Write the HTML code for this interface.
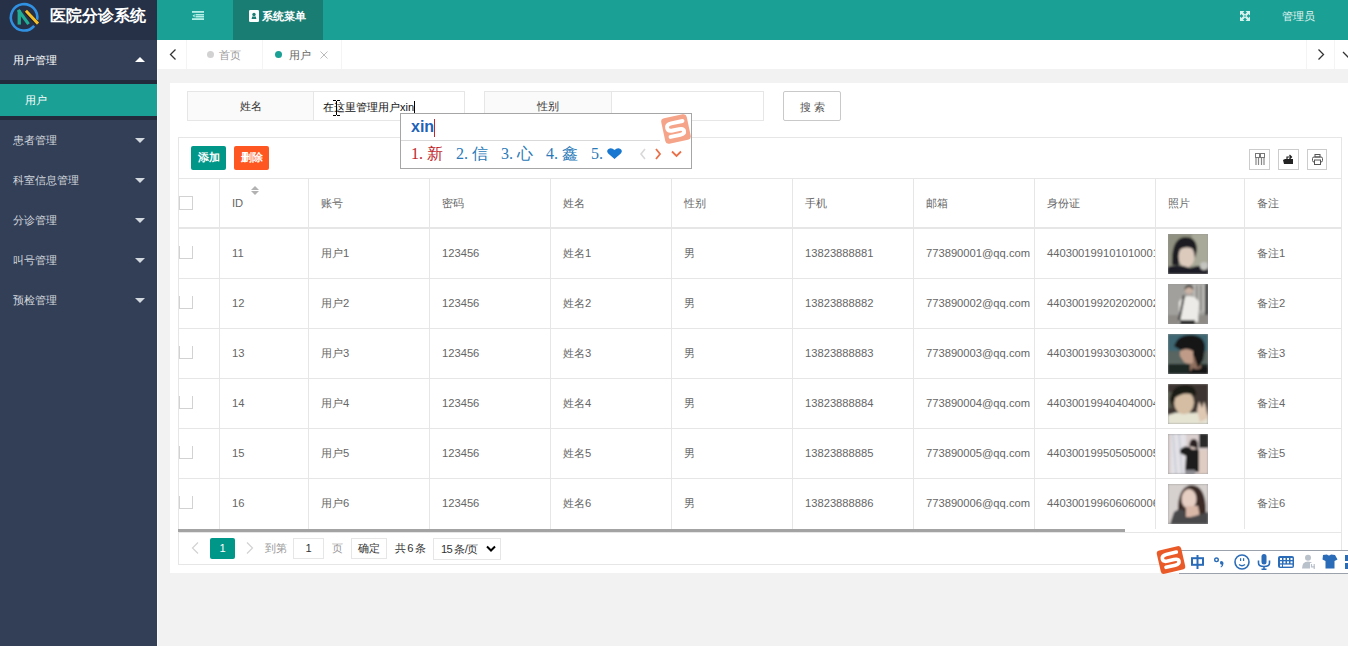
<!DOCTYPE html><html><head><meta charset="utf-8"><style>
*{margin:0;padding:0;box-sizing:border-box}
html,body{width:1348px;height:646px;overflow:hidden;background:#f2f2f2;font-family:"Liberation Sans",sans-serif;font-size:11.2px;color:#666}
.a{position:absolute}
.side{left:0;top:0;width:157px;height:646px;background:#323f57}
.logo{left:0;top:0;width:157px;height:40px;background:#263147}
.logotxt{left:50px;top:0px;height:32px;line-height:32px;font-size:16px;font-weight:bold;color:#fff}
.mi{left:0;width:157px;height:40px;line-height:40px;padding-left:13px;color:#d3d7de;font-size:11.2px}
.tri{width:0;height:0;border-left:5px solid transparent;border-right:5px solid transparent}
.hdr{left:157px;top:0;width:1191px;height:40px;background:#1aa094}
.tabbar{left:157px;top:40px;width:1191px;height:29px;background:#fff}
.vl{width:1px;background:#f4f4f4}
.card{left:170px;top:83px;width:1178px;height:490px;background:#fff}
.lbl{background:#fafafa;border:1px solid #e6e6e6;color:#333;text-align:center;line-height:28px}
.inp{background:#fff;border:1px solid #e6e6e6;color:#333;line-height:28px}
.cell{height:50px;line-height:50px;white-space:nowrap;overflow:hidden;color:#666;padding-left:13px}
.hl{background:#e6e6e6}
.ph{position:absolute;left:1168px;width:40px;height:40px;overflow:hidden}
</style></head><body>
<div class="a side"></div><div class="a logo"></div><div class="a" style="left:157px;top:69px;width:1px;height:577px;background:#fafafa"></div>
<svg class="a" style="left:0;top:0" width="46" height="36" viewBox="0 0 46 36">
<path d="M34.2 25.8 A13.2 13.2 0 1 1 37 20" fill="none" stroke="#3090e2" stroke-width="2.6"/>
<path d="M17.6 10.3 H20.9 V24.6 H17.6Z" fill="#1fae95"/>
<path d="M19.2 11.2 L27.6 22.8" stroke="#1fae95" stroke-width="3.2" stroke-linecap="square"/>
<path d="M25.6 11 L37.8 23.8" stroke="#141a26" stroke-width="4.4"/>
<path d="M25.9 10.8 L38 23.6" stroke="#f3be2a" stroke-width="3"/>
</svg>
<div class="a logotxt">医院分诊系统</div>
<div class="a mi" style="top:40px;background:#323f57;color:#fff">用户管理</div>
<div class="a tri" style="left:135px;top:57px;border-bottom:5px solid #fff"></div>
<div class="a" style="left:0;top:80px;width:157px;height:40px;background:#222b3b"></div>
<div class="a mi" style="top:84px;height:32px;line-height:32px;background:#1aa094;color:#fff;padding-left:25px">用户</div>
<div class="a mi" style="top:120px">患者管理</div>
<div class="a tri" style="left:135px;top:138px;border-top:5px solid #d3d7de"></div>
<div class="a mi" style="top:160px">科室信息管理</div>
<div class="a tri" style="left:135px;top:178px;border-top:5px solid #d3d7de"></div>
<div class="a mi" style="top:200px">分诊管理</div>
<div class="a tri" style="left:135px;top:218px;border-top:5px solid #d3d7de"></div>
<div class="a mi" style="top:240px">叫号管理</div>
<div class="a tri" style="left:135px;top:258px;border-top:5px solid #d3d7de"></div>
<div class="a mi" style="top:280px">预检管理</div>
<div class="a tri" style="left:135px;top:298px;border-top:5px solid #d3d7de"></div>
<div class="a hdr"></div>
<div class="a" style="left:233px;top:0;width:90px;height:40px;background:#1a7d74"></div>
<svg class="a" style="left:192px;top:11px" width="12" height="9" viewBox="0 0 12 9">
<rect x="0" y="0" width="12" height="1.8" fill="#b4efe7"/><rect x="3.5" y="3" width="8.5" height="1.5" fill="#b4efe7"/>
<rect x="3.5" y="5" width="8.5" height="1.5" fill="#b4efe7"/><rect x="0" y="7.2" width="12" height="1.8" fill="#b4efe7"/>
<path d="M0.5 4.7 L2.7 3 L2.7 6.4Z" fill="#b4efe7"/></svg>
<svg class="a" style="left:249px;top:10px" width="10" height="12" viewBox="0 0 10 12">
<rect x="0" y="0" width="10" height="12" rx="1.2" fill="#fbfffd"/><circle cx="5" cy="4.5" r="1.7" fill="#1a7d74"/><path d="M2.6 9 L3.2 6.6 H6.8 L7.4 9Z" fill="#1a7d74"/></svg>
<div class="a" style="left:262px;top:0;height:32px;line-height:32px;color:#fff;font-weight:bold;font-size:11.2px">系统菜单</div>
<svg class="a" style="left:1240px;top:11px" width="10" height="10" viewBox="0 0 10 10">
<path d="M0 0H4.5L0 4.5Z M10 0H5.5L10 4.5Z M0 10H4.5L0 5.5Z M10 10H5.5L10 5.5Z" fill="#d5f3ee"/><path d="M1 1L9 9M9 1L1 9" stroke="#d5f3ee" stroke-width="2.4"/><circle cx="5" cy="5" r="1" fill="#5fb8ad"/></svg>
<div class="a" style="left:1282px;top:0;height:32px;line-height:32px;color:#e4f6f3;font-size:11.2px">管理员</div>
<div class="a tabbar"></div>
<div class="a vl" style="left:186px;top:40px;height:29px"></div>
<div class="a vl" style="left:262px;top:40px;height:29px"></div>
<div class="a vl" style="left:341px;top:40px;height:29px"></div>
<div class="a vl" style="left:1306px;top:40px;height:29px"></div>
<div class="a vl" style="left:1334px;top:40px;height:29px"></div>
<svg class="a" style="left:169px;top:49px" width="8" height="11" viewBox="0 0 8 11"><path d="M6.5 0.5 L1.5 5.5 L6.5 10.5" fill="none" stroke="#333" stroke-width="1.3"/></svg>
<svg class="a" style="left:1317px;top:49px" width="8" height="11" viewBox="0 0 8 11"><path d="M1.5 0.5 L6.5 5.5 L1.5 10.5" fill="none" stroke="#333" stroke-width="1.3"/></svg>
<svg class="a" style="left:1342px;top:49px" width="8" height="11" viewBox="0 0 8 11"><path d="M1 3 L6 8 L11 3" fill="none" stroke="#333" stroke-width="1.3"/></svg>
<div class="a" style="left:207px;top:51px;width:7px;height:7px;border-radius:50%;background:#d2d2d2"></div>
<div class="a" style="left:219px;top:41px;height:29px;line-height:29px;color:#999">首页</div>
<div class="a" style="left:275px;top:51px;width:7px;height:7px;border-radius:50%;background:#1aa094"></div>
<div class="a" style="left:289px;top:41px;height:29px;line-height:29px;color:#666">用户</div>
<svg class="a" style="left:320px;top:51px" width="8" height="8" viewBox="0 0 8 8"><path d="M0.5 0.5L7.5 7.5M7.5 0.5L0.5 7.5" stroke="#bbb" stroke-width="1"/></svg>
<div class="a card"></div>
<div class="a lbl" style="left:187px;top:91px;width:127px;height:30px">姓名</div>
<div class="a inp" style="left:313px;top:91px;width:152px;height:30px;padding-left:9px;font-size:11px;line-height:30px;color:#111">在这里管理用户xin</div>
<div class="a" style="left:400px;top:113px;width:14px;height:1px;background:#222"></div>
<div class="a" style="left:414px;top:101px;width:1px;height:12px;background:#000"></div>
<div class="a lbl" style="left:484px;top:91px;width:128px;height:30px">性别</div>
<div class="a inp" style="left:611px;top:91px;width:153px;height:30px"></div>
<div class="a" style="left:783px;top:91px;width:58px;height:30px;border:1px solid #c9c9c9;border-radius:2px;background:#fff;color:#555;text-align:center;line-height:30px;letter-spacing:3px;padding-left:3px">搜索</div>
<div class="a" style="left:333px;top:100px;width:3px;height:1px;background:#000"></div><div class="a" style="left:337px;top:100px;width:3px;height:1px;background:#000"></div>
<div class="a" style="left:336px;top:101px;width:1px;height:14px;background:#000"></div>
<div class="a" style="left:333px;top:115px;width:3px;height:1px;background:#000"></div><div class="a" style="left:337px;top:115px;width:3px;height:1px;background:#000"></div>
<div class="a" style="left:178px;top:137px;width:1164px;height:428px;border:1px solid #e6e6e6"></div>
<div class="a" style="left:191px;top:146px;width:35px;height:24px;background:#009688;border-radius:2px;color:#fff;text-align:center;line-height:23px;font-size:10.5px;font-weight:bold">添加</div>
<div class="a" style="left:234px;top:146px;width:35px;height:24px;background:#ff5722;border-radius:2px;color:#fff;text-align:center;line-height:23px;font-size:10.5px;font-weight:bold">删除</div>
<div class="a" style="left:1249px;top:149px;width:21px;height:21px;border:1px solid #ccc"></div>
<div class="a" style="left:1278px;top:149px;width:21px;height:21px;border:1px solid #ccc"></div>
<div class="a" style="left:1307px;top:149px;width:20px;height:21px;border:1px solid #ccc"></div>
<svg class="a" style="left:1255px;top:153px" width="10" height="12" viewBox="0 0 10 12">
<rect x="0.5" y="0.5" width="4" height="4" fill="none" stroke="#777"/><rect x="5.5" y="0.5" width="4" height="4" fill="none" stroke="#777"/>
<path d="M1 5V12M3.5 5V12M6.5 5V12M9 5V12" stroke="#888" stroke-width="1.2"/></svg>
<svg class="a" style="left:1283px;top:154px" width="11" height="10" viewBox="0 0 11 10">
<path d="M0 6 L2 5 H10 V10 H1Z" fill="#222"/><path d="M4 5 V3 H8 M6.5 1 L8.5 3 L6.5 5" fill="none" stroke="#222" stroke-width="1.2"/></svg>
<svg class="a" style="left:1312px;top:154px" width="11" height="11" viewBox="0 0 11 11">
<rect x="3" y="0.5" width="5" height="2.5" fill="none" stroke="#555"/><rect x="0.5" y="3" width="10" height="5" rx="1.5" fill="none" stroke="#555"/>
<rect x="2.5" y="6" width="6" height="4.5" fill="#fff" stroke="#555"/></svg>
<div class="a hl" style="left:178px;top:178px;width:1164px;height:1px"></div>
<div class="a hl" style="left:178px;top:227px;width:1164px;height:2px"></div>
<div class="a hl" style="left:178px;top:278px;width:1164px;height:1px"></div>
<div class="a hl" style="left:178px;top:328px;width:1164px;height:1px"></div>
<div class="a hl" style="left:178px;top:378px;width:1164px;height:1px"></div>
<div class="a hl" style="left:178px;top:428px;width:1164px;height:1px"></div>
<div class="a hl" style="left:178px;top:478px;width:1164px;height:1px"></div>
<div class="a hl" style="left:219px;top:178px;width:1px;height:351px"></div>
<div class="a hl" style="left:308px;top:178px;width:1px;height:351px"></div>
<div class="a hl" style="left:429px;top:178px;width:1px;height:351px"></div>
<div class="a hl" style="left:550px;top:178px;width:1px;height:351px"></div>
<div class="a hl" style="left:671px;top:178px;width:1px;height:351px"></div>
<div class="a hl" style="left:792px;top:178px;width:1px;height:351px"></div>
<div class="a hl" style="left:913px;top:178px;width:1px;height:351px"></div>
<div class="a hl" style="left:1034px;top:178px;width:1px;height:351px"></div>
<div class="a hl" style="left:1155px;top:178px;width:1px;height:351px"></div>
<div class="a hl" style="left:1244px;top:178px;width:1px;height:351px"></div>
<div class="a hl" style="left:1341px;top:178px;width:1px;height:351px"></div>
<div class="a cell" style="left:219px;top:178px;width:89px">ID</div>
<div class="a cell" style="left:308px;top:178px;width:121px">账号</div>
<div class="a cell" style="left:429px;top:178px;width:121px">密码</div>
<div class="a cell" style="left:550px;top:178px;width:121px">姓名</div>
<div class="a cell" style="left:671px;top:178px;width:121px">性别</div>
<div class="a cell" style="left:792px;top:178px;width:121px">手机</div>
<div class="a cell" style="left:913px;top:178px;width:121px">邮箱</div>
<div class="a cell" style="left:1034px;top:178px;width:121px">身份证</div>
<div class="a cell" style="left:1155px;top:178px;width:89px">照片</div>
<div class="a cell" style="left:1244px;top:178px;width:97px">备注</div>
<div class="a" style="left:179px;top:196px;width:14px;height:14px;border:1px solid #d2d2d2"></div>
<svg class="a" style="left:251px;top:186px" width="8" height="9" viewBox="0 0 8 9"><path d="M4 0L8 4H0Z M4 9L8 5H0Z" fill="#b2b2b2"/></svg>
<div class="a" style="left:179px;top:246px;width:14px;height:13px;border:1px solid #d2d2d2;border-top:none"></div>
<div class="a cell" style="left:219px;top:228px;width:89px">11</div>
<div class="a cell" style="left:308px;top:228px;width:121px">用户1</div>
<div class="a cell" style="left:429px;top:228px;width:121px">123456</div>
<div class="a cell" style="left:550px;top:228px;width:121px">姓名1</div>
<div class="a cell" style="left:671px;top:228px;width:121px">男</div>
<div class="a cell" style="left:792px;top:228px;width:121px">13823888881</div>
<div class="a cell" style="left:913px;top:228px;width:121px">773890001@qq.com</div>
<div class="a cell" style="left:1034px;top:228px;width:121px">440300199101010001</div>
<div class="ph" style="top:234px"><svg width="40" height="40"><defs><filter id="b0" x="-10%" y="-10%" width="120%" height="120%"><feGaussianBlur stdDeviation="1.1"/></filter></defs><rect width="40" height="40" fill="#999"/><g filter="url(#b0)"><rect width="40" height="40" fill="#8f907f"/><rect x="24" y="0" width="16" height="40" fill="#a8a998"/>
<path d="M4 31 Q3 4 17 3 Q29 3 29 16 L27 24 L24 12 Q18 9 12 14 L11 31Z" fill="#1e1e21"/><ellipse cx="18.5" cy="22.5" rx="8" ry="11" fill="#dccabd"/><path d="M10 13 Q16 7 26 12 L25 15 Q18 11 11 16Z" fill="#1e1e21"/>
<path d="M0 40 L0 33 Q10 29 22 34 Q32 30 40 33 L40 40Z" fill="#1c1f26"/><circle cx="36" cy="32" r="4" fill="#c4c4c0"/></g></svg></div>
<div class="a cell" style="left:1244px;top:228px;width:97px">备注1</div>
<div class="a" style="left:179px;top:296px;width:14px;height:13px;border:1px solid #d2d2d2;border-top:none"></div>
<div class="a cell" style="left:219px;top:278px;width:89px">12</div>
<div class="a cell" style="left:308px;top:278px;width:121px">用户2</div>
<div class="a cell" style="left:429px;top:278px;width:121px">123456</div>
<div class="a cell" style="left:550px;top:278px;width:121px">姓名2</div>
<div class="a cell" style="left:671px;top:278px;width:121px">男</div>
<div class="a cell" style="left:792px;top:278px;width:121px">13823888882</div>
<div class="a cell" style="left:913px;top:278px;width:121px">773890002@qq.com</div>
<div class="a cell" style="left:1034px;top:278px;width:121px">440300199202020002</div>
<div class="ph" style="top:284px"><svg width="40" height="40"><defs><filter id="b1" x="-10%" y="-10%" width="120%" height="120%"><feGaussianBlur stdDeviation="1.1"/></filter></defs><rect width="40" height="40" fill="#999"/><g filter="url(#b1)"><rect width="40" height="40" fill="#a2a09d"/><rect x="25" y="0" width="13" height="28" fill="#bab8b3"/>
<rect x="28" y="1" width="1.5" height="26" fill="#777"/><rect x="32" y="1" width="1.5" height="26" fill="#777"/><rect x="37" y="0" width="3" height="32" fill="#3d3d3d"/>
<rect x="0" y="31" width="40" height="9" fill="#8e8b86"/>
<path d="M11 38 L11 18 Q14 12 21 12 Q28 12 31 18 L30 38Z" fill="#ecebe7"/><path d="M15 11 L17 12 L12 37 L10 36Z" fill="#2b2b2b"/>
<circle cx="21" cy="6" r="4" fill="#c9b3a4"/><path d="M16.5 6 Q21 0 25.5 6 L25 3 Q21 -1 17 3Z" fill="#2a2a2a"/><rect x="12" y="36" width="15" height="4" fill="#2e2e2e"/></g></svg></div>
<div class="a cell" style="left:1244px;top:278px;width:97px">备注2</div>
<div class="a" style="left:179px;top:346px;width:14px;height:13px;border:1px solid #d2d2d2;border-top:none"></div>
<div class="a cell" style="left:219px;top:328px;width:89px">13</div>
<div class="a cell" style="left:308px;top:328px;width:121px">用户3</div>
<div class="a cell" style="left:429px;top:328px;width:121px">123456</div>
<div class="a cell" style="left:550px;top:328px;width:121px">姓名3</div>
<div class="a cell" style="left:671px;top:328px;width:121px">男</div>
<div class="a cell" style="left:792px;top:328px;width:121px">13823888883</div>
<div class="a cell" style="left:913px;top:328px;width:121px">773890003@qq.com</div>
<div class="a cell" style="left:1034px;top:328px;width:121px">440300199303030003</div>
<div class="ph" style="top:334px"><svg width="40" height="40"><defs><filter id="b2" x="-10%" y="-10%" width="120%" height="120%"><feGaussianBlur stdDeviation="1.1"/></filter></defs><rect width="40" height="40" fill="#999"/><g filter="url(#b2)"><rect width="40" height="40" fill="#3e6672"/><rect x="0" y="17" width="40" height="14" fill="#596560"/><rect x="0" y="30" width="40" height="10" fill="#1f2622"/>
<path d="M22 18 Q30 20 33 32 L36 40 L22 40Z" fill="#8f6e5e"/>
<path d="M6 12 Q10 0 24 1 Q37 2 37 14 L35 26 L30 34 L26 22 L14 17Z" fill="#141414"/><path d="M12 17 Q18 13 25 17 L25 29 Q20 31 16 28 L12 22Z" fill="#c09c88"/>
<path d="M20 40 L25 34 Q30 37 34 33 L40 34 L40 40Z" fill="#151515"/></g></svg></div>
<div class="a cell" style="left:1244px;top:328px;width:97px">备注3</div>
<div class="a" style="left:179px;top:396px;width:14px;height:13px;border:1px solid #d2d2d2;border-top:none"></div>
<div class="a cell" style="left:219px;top:378px;width:89px">14</div>
<div class="a cell" style="left:308px;top:378px;width:121px">用户4</div>
<div class="a cell" style="left:429px;top:378px;width:121px">123456</div>
<div class="a cell" style="left:550px;top:378px;width:121px">姓名4</div>
<div class="a cell" style="left:671px;top:378px;width:121px">男</div>
<div class="a cell" style="left:792px;top:378px;width:121px">13823888884</div>
<div class="a cell" style="left:913px;top:378px;width:121px">773890004@qq.com</div>
<div class="a cell" style="left:1034px;top:378px;width:121px">440300199404040004</div>
<div class="ph" style="top:384px"><svg width="40" height="40"><defs><filter id="b3" x="-10%" y="-10%" width="120%" height="120%"><feGaussianBlur stdDeviation="1.1"/></filter></defs><rect width="40" height="40" fill="#999"/><g filter="url(#b3)"><rect width="40" height="40" fill="#3c3632"/><rect x="0" y="8" width="5" height="16" fill="#55594c"/>
<path d="M0 40 L0 31 Q12 26 24 29 Q34 27 40 31 L40 40Z" fill="#e5e3d2"/>
<ellipse cx="16" cy="18.5" rx="10" ry="11.5" fill="#d4bda3"/><path d="M2 16 Q4 0 19 1 Q29 2 28 12 Q17 6 7 14 L5 24Z" fill="#1f1c19"/>
<path d="M29 26 L31 17 L34 24 L36 17 L38 24 L40 34 L32 38Z" fill="#dfc8b4"/></g></svg></div>
<div class="a cell" style="left:1244px;top:378px;width:97px">备注4</div>
<div class="a" style="left:179px;top:446px;width:14px;height:13px;border:1px solid #d2d2d2;border-top:none"></div>
<div class="a cell" style="left:219px;top:428px;width:89px">15</div>
<div class="a cell" style="left:308px;top:428px;width:121px">用户5</div>
<div class="a cell" style="left:429px;top:428px;width:121px">123456</div>
<div class="a cell" style="left:550px;top:428px;width:121px">姓名5</div>
<div class="a cell" style="left:671px;top:428px;width:121px">男</div>
<div class="a cell" style="left:792px;top:428px;width:121px">13823888885</div>
<div class="a cell" style="left:913px;top:428px;width:121px">773890005@qq.com</div>
<div class="a cell" style="left:1034px;top:428px;width:121px">440300199505050005</div>
<div class="ph" style="top:434px"><svg width="40" height="40"><defs><filter id="b4" x="-10%" y="-10%" width="120%" height="120%"><feGaussianBlur stdDeviation="1.1"/></filter></defs><rect width="40" height="40" fill="#999"/><g filter="url(#b4)"><rect width="40" height="40" fill="#dacfcf"/><rect x="3" y="0" width="15" height="40" fill="#e4e2e6"/><path d="M5 0 L8 40 M11 0 L14 40" stroke="#c3cbd6" stroke-width="1.5"/>
<rect x="31" y="0" width="9" height="14" fill="#2b2b2b"/><rect x="30" y="16" width="10" height="24" fill="#dfcdc3"/>
<path d="M12 16 Q16 11 21 13 L24 14 L31 16 L31 38 L17 38 L18 22 L12 19Z" fill="#1d1b1d"/><ellipse cx="25.5" cy="11" rx="3.6" ry="4.6" fill="#e6d3ca"/>
<path d="M21 12 Q22 4 26 5 Q30 5 30 12 L30 20 L28 14Z" fill="#2a2223"/><rect x="17" y="36" width="10" height="4" fill="#8a8a90"/></g></svg></div>
<div class="a cell" style="left:1244px;top:428px;width:97px">备注5</div>
<div class="a" style="left:179px;top:496px;width:14px;height:13px;border:1px solid #d2d2d2;border-top:none"></div>
<div class="a cell" style="left:219px;top:478px;width:89px">16</div>
<div class="a cell" style="left:308px;top:478px;width:121px">用户6</div>
<div class="a cell" style="left:429px;top:478px;width:121px">123456</div>
<div class="a cell" style="left:550px;top:478px;width:121px">姓名6</div>
<div class="a cell" style="left:671px;top:478px;width:121px">男</div>
<div class="a cell" style="left:792px;top:478px;width:121px">13823888886</div>
<div class="a cell" style="left:913px;top:478px;width:121px">773890006@qq.com</div>
<div class="a cell" style="left:1034px;top:478px;width:121px">440300199606060006</div>
<div class="ph" style="top:484px"><svg width="40" height="40"><defs><filter id="b5" x="-10%" y="-10%" width="120%" height="120%"><feGaussianBlur stdDeviation="1.1"/></filter></defs><rect width="40" height="40" fill="#999"/><g filter="url(#b5)"><rect width="40" height="40" fill="#d6d0ce"/>
<path d="M10 30 Q9 2 24 1 Q38 2 38 28 L36 34 L12 34Z" fill="#3b2a25"/><ellipse cx="21" cy="15" rx="7.5" ry="10" fill="#e6cec2"/>
<path d="M18 22 L30 22 L32 33 L18 33Z" fill="#d9b8a8"/>
<path d="M2 40 L6 28 Q12 23 17 27 L18 34 Q28 32 40 28 L40 40Z" fill="#4a4a4c"/></g></svg></div>
<div class="a cell" style="left:1244px;top:478px;width:97px">备注6</div>
<div class="a" style="left:178px;top:529px;width:947px;height:3px;background:#a3a3a3"></div>
<div class="a hl" style="left:178px;top:532px;width:1164px;height:1px"></div>
<svg class="a" style="left:191px;top:542px" width="8" height="12" viewBox="0 0 8 12"><path d="M7 0.5L1.5 6L7 11.5" fill="none" stroke="#d2d2d2" stroke-width="1.2"/></svg>
<div class="a" style="left:210px;top:538px;width:25px;height:21px;background:#009688;border-radius:2px;color:#fff;text-align:center;line-height:21px">1</div>
<svg class="a" style="left:246px;top:542px" width="8" height="12" viewBox="0 0 8 12"><path d="M1 0.5L6.5 6L1 11.5" fill="none" stroke="#d2d2d2" stroke-width="1.2"/></svg>
<div class="a" style="left:265px;top:538px;line-height:20px;color:#999">到第</div>
<div class="a" style="left:293px;top:538px;width:31px;height:21px;border:1px solid #e6e6e6;text-align:center;line-height:19px;color:#333">1</div>
<div class="a" style="left:332px;top:538px;line-height:20px;color:#999">页</div>
<div class="a" style="left:351px;top:538px;width:36px;height:21px;border:1px solid #e6e6e6;text-align:center;line-height:19px;color:#333;font-size:11px">确定</div>
<div class="a" style="left:395px;top:538px;line-height:20px;color:#333;letter-spacing:-0.9px">共 6 条</div>
<div class="a" style="left:433px;top:538px;width:68px;height:22px;border:1px solid #e6e6e6;line-height:20px;color:#333;padding-left:7px;letter-spacing:-0.7px">15 条/页</div>
<svg class="a" style="left:486px;top:545px" width="10" height="8" viewBox="0 0 10 8"><path d="M1 1.5L5 5.5L9 1.5" fill="none" stroke="#000" stroke-width="2"/></svg>
<div class="a" style="left:400px;top:113px;width:292px;height:56px;background:#fff"></div>
<div class="a" style="left:401px;top:140px;width:259px;height:1px;background:#d9d9d9"></div>
<div class="a" style="left:411px;top:114px;height:26px;line-height:26px;font-size:16px;font-weight:bold;color:#1f63b8">xin</div>
<div class="a" style="left:434px;top:119px;width:1px;height:18px;background:#c0282d"></div>
<div class="a" style="left:411px;top:142px;height:24px;line-height:24px;font-size:16px;font-family:'Liberation Serif',serif;color:#c0282d">1<span style="letter-spacing:4px">.</span></div>
<div class="a" style="left:427px;top:142px;height:24px;line-height:24px;font-size:16px;font-family:'Liberation Serif',serif;color:#c0282d">新</div>
<div class="a" style="left:456px;top:142px;height:24px;line-height:24px;font-size:16px;font-family:'Liberation Serif',serif;color:#2a7ab8">2<span style="letter-spacing:4px">.</span></div>
<div class="a" style="left:472px;top:142px;height:24px;line-height:24px;font-size:16px;font-family:'Liberation Serif',serif;color:#2a7ab8">信</div>
<div class="a" style="left:501px;top:142px;height:24px;line-height:24px;font-size:16px;font-family:'Liberation Serif',serif;color:#2a7ab8">3<span style="letter-spacing:4px">.</span></div>
<div class="a" style="left:517px;top:142px;height:24px;line-height:24px;font-size:16px;font-family:'Liberation Serif',serif;color:#2a7ab8">心</div>
<div class="a" style="left:546px;top:142px;height:24px;line-height:24px;font-size:16px;font-family:'Liberation Serif',serif;color:#2a7ab8">4<span style="letter-spacing:4px">.</span></div>
<div class="a" style="left:562px;top:142px;height:24px;line-height:24px;font-size:16px;font-family:'Liberation Serif',serif;color:#2a7ab8">鑫</div>
<div class="a" style="left:591px;top:142px;height:24px;line-height:24px;font-size:16px;font-family:'Liberation Serif',serif;color:#2a7ab8">5<span style="letter-spacing:4px">.</span></div>
<svg class="a" style="left:607px;top:148px" width="15" height="11" viewBox="0 0 15 13" preserveAspectRatio="none"><path d="M7.5 13 L1.2 6.5 Q-1 3.5 1.5 1.2 Q4.5 -1 7.5 2.5 Q10.5 -1 13.5 1.2 Q16 3.5 13.8 6.5Z" fill="#1877d1"/></svg>
<svg class="a" style="left:638px;top:148px" width="46" height="12" viewBox="0 0 46 12">
<path d="M7 1 L3 6 L7 11" fill="none" stroke="#d8d8d8" stroke-width="1.6"/>
<path d="M18 1 L22 6 L18 11" fill="none" stroke="#e8704a" stroke-width="1.8"/>
<path d="M34 3.5 L38.5 8 L43 3.5" fill="none" stroke="#e8704a" stroke-width="1.8"/></svg>
<div class="a" style="left:401px;top:114px;width:290px;height:54px;overflow:hidden"><svg class="a" style="left:256px;top:-4px" width="38" height="38" viewBox="0 0 38 38" opacity="0.62">
<g transform="rotate(-12 19 19)"><rect x="6" y="6" width="26" height="26" rx="3.5" fill="#ef6d42"/>
<path d="M27 12.5 H15.5 Q10.5 12.5 10.5 16.3 Q10.5 19.8 15.5 19.8 H22 Q26.5 19.8 26.5 22.6 Q26.5 25.6 22 25.6 H12" fill="none" stroke="#fff" stroke-width="3.9" stroke-linecap="round"/></g></svg></div>
<div class="a" style="left:400px;top:113px;width:292px;height:56px;border:1px solid #a6a6a6"></div>
<div class="a" style="left:1179px;top:550px;width:169px;height:24px;background:#fff;border-top:1px solid #9ba2ab;border-bottom:1px solid #9ba2ab"></div>
<svg class="a" style="left:1153px;top:543px" width="36" height="34" viewBox="0 0 36 34">
<g transform="rotate(-13 18 17)"><rect x="5.5" y="5" width="25" height="24" rx="3.2" fill="#ea5a28"/>
<path d="M25 10.5 H14.5 Q9.8 10.5 9.8 14 Q9.8 17.3 14.5 17.3 H21 Q25.5 17.3 25.5 20 Q25.5 23 21 23 H11.5" fill="none" stroke="#fff" stroke-width="3.6" stroke-linecap="round"/></g></svg>
<svg class="a" style="left:1190px;top:554px" width="150" height="17" viewBox="0 0 150 17">
<g fill="none" stroke="#2b6cb8">
<rect x="2" y="4.2" width="11" height="6.6" stroke-width="2"/><path d="M7.5 1 V15" stroke-width="2"/>
<circle cx="26.5" cy="5.8" r="1.8" stroke-width="1.4"/>
<circle cx="52" cy="8" r="7" stroke-width="1.6"/><path d="M49 10.5 Q52 13 55 10.5" stroke-width="1.4"/>
<path d="M68.5 6.5 V9 Q68.5 12.5 74 12.5 Q79.5 12.5 79.5 9 V6.5 M74 12.5 V15 M71.5 15.2 H76.5" stroke-width="1.6"/>
</g>
<g fill="#2b6cb8"><path d="M31 7 Q33.5 7 33.5 9.5 Q33.5 12 31 13.5 L30.5 12.8 Q32 11.8 31.8 10.8 Q30 10.8 30 9 Q30 7 31 7Z"/>
<rect x="50" y="4.2" width="1.2" height="2.8"/><rect x="53" y="4.2" width="1.2" height="2.8"/>
<rect x="71.5" y="0" width="5" height="10.5" rx="2.5"/>
<rect x="88" y="2" width="16" height="12" rx="2"/>
<path d="M133 1 L137 0.6 Q139 2.5 141 0.6 L145 1 L147.5 5.5 L144.5 7 L144.5 14.5 L135.5 14.5 L135.5 7 L132.5 5.5Z"/>
<rect x="155" y="1" width="6" height="6"/></g>
<g fill="#fff"><rect x="90" y="4" width="2" height="2"/><rect x="93.5" y="4" width="2" height="2"/><rect x="97" y="4" width="2" height="2"/><rect x="100.5" y="4" width="2" height="2"/>
<rect x="90" y="7.3" width="2" height="2"/><rect x="93.5" y="7.3" width="2" height="2"/><rect x="97" y="7.3" width="2" height="2"/><rect x="100.5" y="7.3" width="2" height="2"/>
<rect x="90" y="10.6" width="2" height="2"/><rect x="93" y="10.6" width="9.5" height="2"/></g>
<g fill="#b9c1ca"><circle cx="118" cy="3.7" r="3"/><path d="M112 14.5 Q112 7.5 118 7.5 Q124 7.5 124 14.5Z"/></g>
<rect x="120" y="9" width="6.5" height="6.5" fill="#fff"/><path d="M121.5 10 V12.8 H125 M124.2 10 V15" fill="none" stroke="#b9c1ca" stroke-width="1.2"/>
</svg>
<div class="a" style="left:1345px;top:555px;width:3px;height:6px;background:#2b6cb8"></div><div class="a" style="left:1345px;top:563px;width:3px;height:6px;background:#2b6cb8"></div>
</body></html>
